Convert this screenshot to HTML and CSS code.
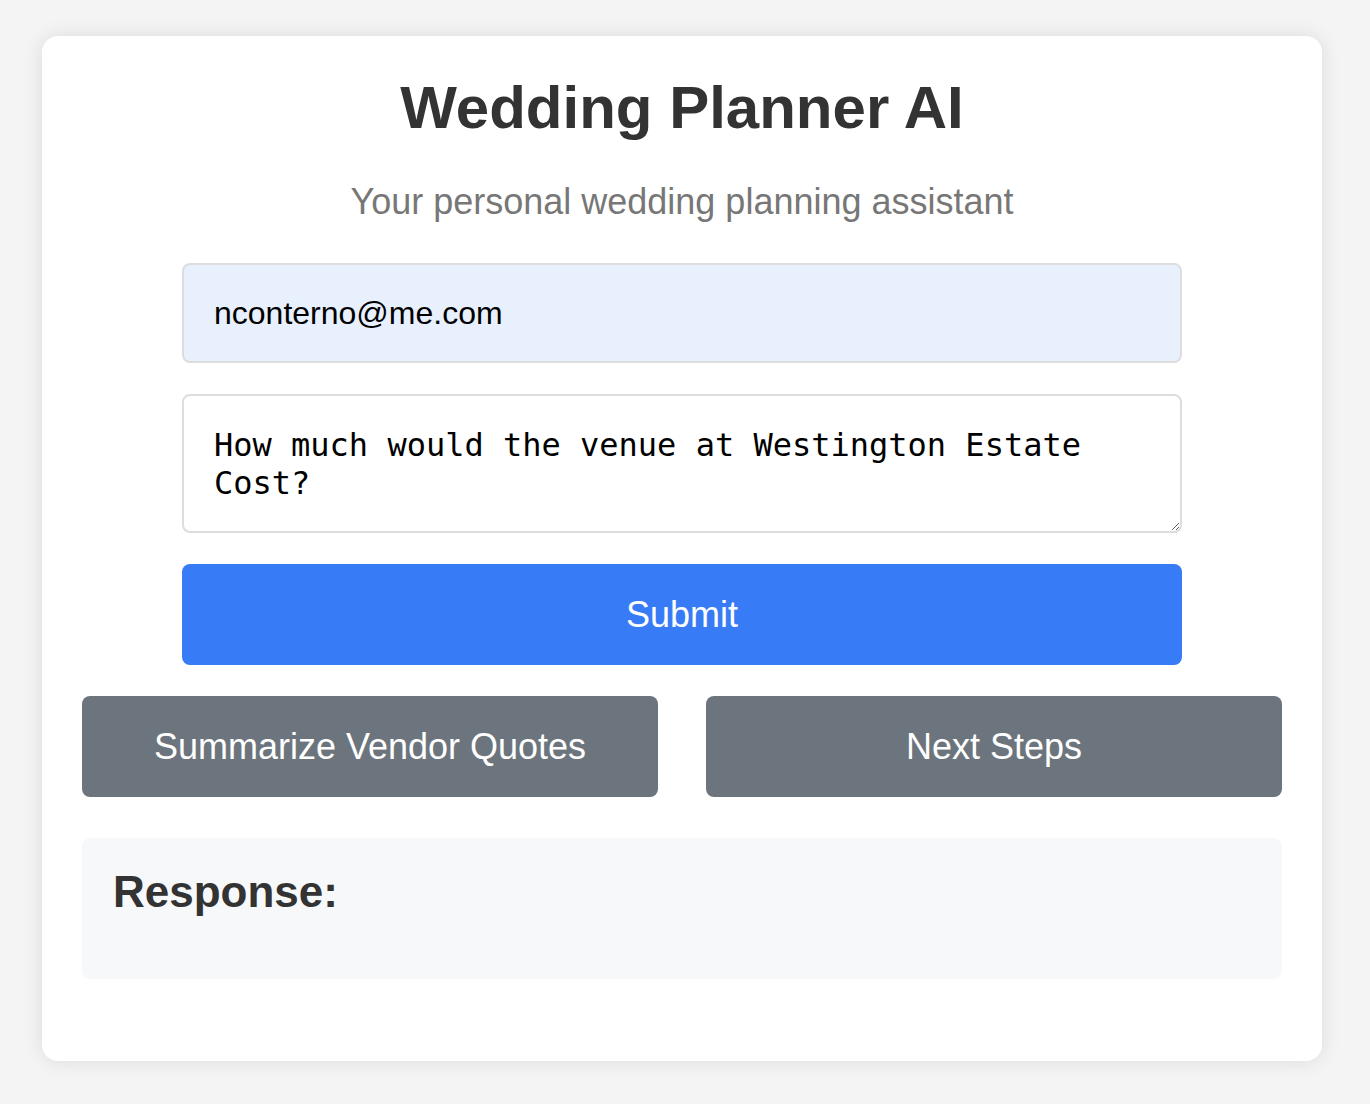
FILE: index.html
```html
<!DOCTYPE html>
<html lang="en">
<head>
<meta charset="utf-8">
<title>Wedding Planner AI</title>
<link rel="stylesheet" href="styles.css">
</head>
<body>
  <main class="card">
    <h1 class="title">Wedding Planner AI</h1>
    <p class="subtitle">Your personal wedding planning assistant</p>
    <form class="form">
      <input class="field email" type="email" value="nconterno@me.com">
      <textarea class="field question" rows="2" spellcheck="false">How much would the venue at Westington Estate Cost?</textarea>
      <button type="button" class="btn primary">Submit</button>
    </form>
    <div class="actions">
      <button type="button" class="btn secondary">Summarize Vendor Quotes</button>
      <button type="button" class="btn secondary">Next Steps</button>
    </div>
    <section class="response">
      <h3 class="response-title">Response:</h3>
    </section>
  </main>
</body>
</html>
```

FILE: styles.css
```css
html, body {
  margin: 0;
  padding: 0;
}

body {
  background: #f4f4f4;
  font-family: "Liberation Sans", Arial, sans-serif;
  color: #333;
  padding: 36px 48px 44px 42px;
}

.card {
  background: #fff;
  border-radius: 16px;
  box-shadow: 0 0 20px rgba(0, 0, 0, 0.1);
  padding: 37px 40px 41px;
  display: flex;
  flex-direction: column;
}

.title {
  margin: 0;
  text-align: center;
  font-size: 60px;
  font-weight: bold;
  line-height: 69px;
  color: #333;
}

.subtitle {
  margin: 39px 0 0;
  text-align: center;
  font-size: 36px;
  line-height: 41px;
  color: #777;
}

.form {
  width: 1000px;
  align-self: center;
  margin-top: 41px;
  display: flex;
  flex-direction: column;
  gap: 31px;
}

.field {
  display: block;
  box-sizing: border-box;
  width: 100%;
  border: 2px solid #ddd;
  border-radius: 8px;
  padding: 30px;
  margin: 0;
  color: #000;
  outline: none;
}

.email {
  background: #e8f0fe;
  font-family: "Liberation Sans", Arial, sans-serif;
  font-size: 32px;
  line-height: 37px;
  height: 100px;
}

.question {
  background: #fff;
  font-family: "DejaVu Sans Mono", "Liberation Mono", monospace;
  font-size: 32px;
  line-height: 38px;
  height: 139px;
  padding: 30px 30px 0;
  resize: vertical;
}

.btn {
  display: block;
  border: none;
  border-radius: 8px;
  color: #fff;
  font-family: "Liberation Sans", Arial, sans-serif;
  font-size: 36px;
  line-height: 41px;
  padding: 30px;
  height: 101px;
  cursor: pointer;
}

.primary {
  width: 100%;
  background: #377bf6;
}

.actions {
  margin-top: 31px;
  display: grid;
  grid-template-columns: 1fr 1fr;
  gap: 48px;
}

.secondary {
  background: #6c757d;
}

.response {
  margin-top: 41px;
  background: #f7f8fa;
  border-radius: 8px;
  padding: 28px 31px 30px;
  margin-bottom: 41px;
}

.response-title {
  margin: 0 0 32px;
  font-size: 44px;
  line-height: 51px;
  font-weight: bold;
  color: #333;
}
```
